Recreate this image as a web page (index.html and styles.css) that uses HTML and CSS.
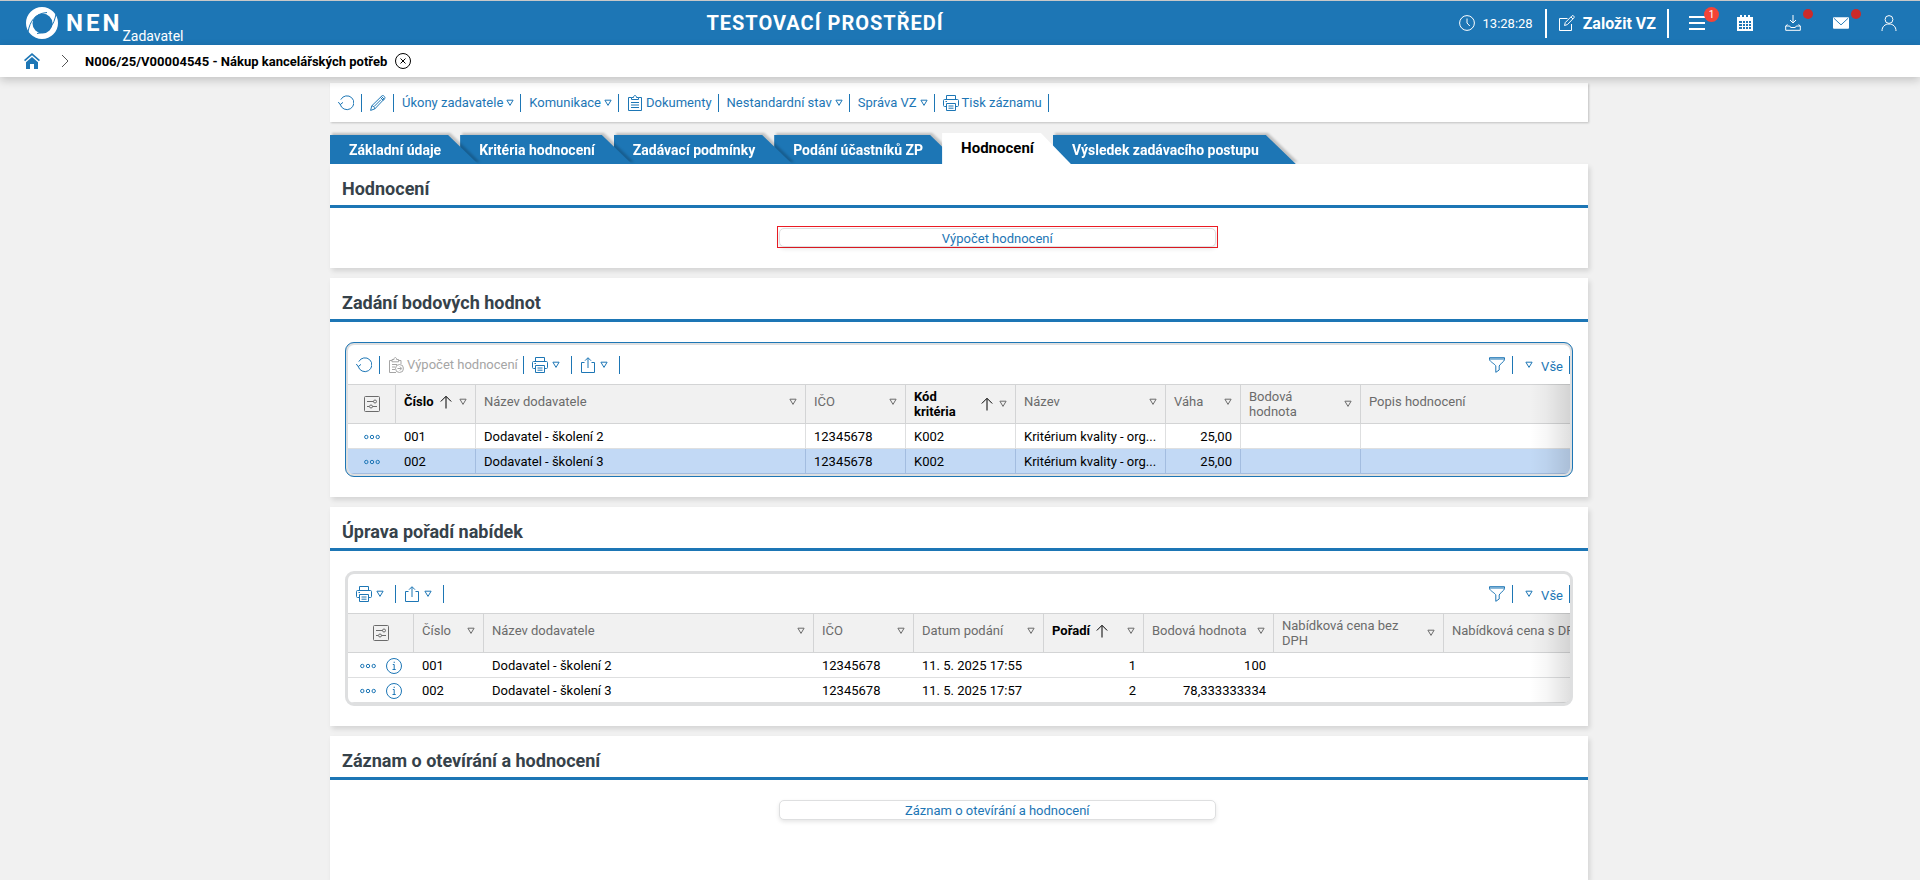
FILE: index.html
```html
<!DOCTYPE html>
<html lang="cs">
  <head>
    <meta charset="UTF-8" />
    <meta name="viewport" content="width=device-width, initial-scale=1.0" />
    <title>NEN - Hodnocení</title>
    <link rel="stylesheet" href="styles.css">
  </head>
  <body>
    <!-- Icon sprite -->
    <svg class="sprite" aria-hidden="true">
      <symbol id="i-refresh" viewBox="0 0 16 16">
        <path d="M2.200 9.200A6.900 6.900 0 1 0 2.800 4.600M.3 7l1.900 2.600L5 7.400" />
      </symbol>
      <symbol id="i-pencil" viewBox="0 0 16 16">
        <path d="M.6 15.400l1.200-4.600L12 .8c.6-.5 1.400-.3 2.200.5s1 1.600.5 2.200L4.800 13.900zM1.800 10.800c1.500.1 2.800 1.300 3 3.100M10.400 2.400l3 3M11.400 1.400l3 3M4 11.600L11 4.600" />
      </symbol>
      <symbol id="i-tri" viewBox="0 0 8 8">
        <path d="M.9 1.200h6.200L4 6.400z" />
      </symbol>
      <symbol id="i-clip" viewBox="0 0 16 16">
        <path d="M4.500 2.500h-3v13h13v-13h-3M4.500 4.500v-2h2c0-1.200.6-2 1.500-2s1.500.8 1.500 2h2v2zM4 7.500h8M4 10h8M4 12.500h8" />
      </symbol>
      <symbol id="i-clip-calc" viewBox="0 0 16 16">
        <path d="M8 15.500H1.500v-12H4M10.500 3.500h2.500V7M4 4.800V2.500h2c0-1.200.5-2 1.300-2s1.300.8 1.300 2h2v2.300zM4 7.500h5M4 10h3M4 12.500h3M9.500 11.500h4M11.800 9.500l2 2-2 2" />
        <circle cx="11.500" cy="11.500" r="4" />
      </symbol>
      <symbol id="i-print" viewBox="0 0 16 16">
        <path d="M3.500 4.500v-4h9v4M3.500 11.500h-2c-.6 0-1-.4-1-1v-5c0-.6.4-1 1-1h13c.6 0 1 .4 1 1v5c0 .6-.4 1-1 1h-2M3.500 8.500h9v7h-9zM5.500 11h5M5.500 13.200h5M2.500 6.500h1.500" />
      </symbol>
      <symbol id="i-share" viewBox="0 0 16 16">
        <path d="M4.500 5.500h-3v10h13v-10h-3M8 11V1M5 3.700L8 .7l3 3" />
      </symbol>
      <symbol id="i-filter" viewBox="0 0 16 16">
        <path d="M.5.700h15v2c0 1.600-5.300 5-5.300 6.300v4l-3.400 2.300V9C6.800 7.700.5 4.300.5 2.700zM.5 2h15" />
      </symbol>
      <symbol id="i-settings" viewBox="0 0 16 16">
        <rect x=".5" y=".5" width="15" height="15" rx="1" />
        <path d="M3 5.500h6.500M3 10.500h2M8.500 10.500H13" />
        <circle cx="11" cy="5.500" r="1.500" />
        <circle cx="7" cy="10.500" r="1.500" />
      </symbol>
      <symbol id="i-dots" viewBox="0 0 16 16">
        <circle cx="2.300" cy="8" r="1.700" />
        <circle cx="8" cy="8" r="1.700" />
        <circle cx="13.700" cy="8" r="1.700" />
      </symbol>
      <symbol id="i-info" viewBox="0 0 16 16">
        <circle cx="8" cy="8" r="7.500" />
        <path d="M6.800 6.500h1.400v5M6.500 11.500h3.200M8.200 3.700v1.300" />
      </symbol>
      <symbol id="i-up" viewBox="0 0 12 14">
        <path d="M6 13.500V1.500M.8 6.500L6 1.300l5.200 5.200" />
      </symbol>
      <symbol id="i-clock" viewBox="0 0 16 16">
        <circle cx="8" cy="8" r="7.400" />
        <path d="M8 3.500V8l2.800 3" />
      </symbol>
      <symbol id="i-edit" viewBox="0 0 16 16">
        <path d="M8.500 3.500h-8v12h12V9M5.500 10.500l.8-3L13 .8c.5-.4 1.200-.3 1.700.2s.7 1.300.2 1.800L8.400 9.600zM12 2l2 2" />
      </symbol>
      <symbol id="i-menu" viewBox="0 0 16 16">
        <path class="thick" d="M0 2h16M0 8h16M0 14h16" />
      </symbol>
      <symbol id="i-calendar" viewBox="0 0 16 16">
        <path class="solid" d="M0 2h3V0h2v2h2V0h2v2h2V0h2v2h3v14H0z" />
        <path class="blue" d="M2 6h12v8H2z" />
        <path d="M2 8.500h12M2 11.500h12M5.500 6v8M8.500 6v8M11.500 6v8" />
      </symbol>
      <symbol id="i-download" viewBox="0 0 16 16">
        <path d="M8 0v8M5 5l3 3 3-3M2.500 9.500L.7 11v4.300h14.600V11l-1.800-1.500M.7 11h4l1 1.500h4.600l1-1.500h4" />
      </symbol>
      <symbol id="i-mail" viewBox="0 0 17 16">
        <rect class="solid" x="0" y="2" width="17" height="12" rx="1" />
        <path class="blue-line" d="M1 3l7.500 7L16 3" />
      </symbol>
      <symbol id="i-user" viewBox="0 0 16 16">
        <circle cx="8" cy="4.500" r="3.900" />
        <path d="M1 16c0-4.500 3-7 7-7s7 2.500 7 7" />
      </symbol>
      <symbol id="i-home" viewBox="0 0 16 16">
        <path class="solid" d="M8 0l8 7-1.100 1.200L8 2.200 1.100 8.200 0 7z" />
        <path class="solid" d="M8 4l6 5.200V16h-4v-5H6v5H2V9.200z" />
      </symbol>
      <symbol id="i-close" viewBox="0 0 16 16">
        <circle cx="8" cy="8" r="7.500" />
        <path d="M5.500 5.500l5 5M10.500 5.500l-5 5" />
      </symbol>
    </svg>

    <header class="topbar">
      <a class="logo" href="#">
        <svg class="logo-mark" viewBox="0 0 32 32" aria-hidden="true">
          <path fill-rule="evenodd" d="M16 0a16 16 0 1 1 0 32a16 16 0 1 1 0-32zM16.500 6.500a10 10 0 1 0 0 20a10 10 0 1 0 0-20z" />
          <path class="logo-cut" d="M2 25C4 14 9 6.500 21 5.500M30 7C28 18 23 25.500 11 26.500" />
        </svg>
        <span class="logo-name">NEN</span>
        <span class="logo-role">Zadavatel</span>
      </a>
      <div class="env">TESTOVACÍ PROSTŘEDÍ</div>
      <div class="topbar-right">
        <span class="clock"><svg class="icon"><use href="#i-clock" /></svg>13:28:28</span>
        <button class="create"><svg class="icon"><use href="#i-edit" /></svg>Založit VZ</button>
        <nav class="top-icons">
          <button aria-label="Menu"><svg class="icon"><use href="#i-menu" /></svg><span class="badge">1</span></button>
          <button aria-label="Kalendář"><svg class="icon"><use href="#i-calendar" /></svg></button>
          <button aria-label="Stažení"><svg class="icon"><use href="#i-download" /></svg><span class="dot"></span></button>
          <button aria-label="Zprávy"><svg class="icon"><use href="#i-mail" /></svg><span class="dot"></span></button>
          <button aria-label="Uživatel"><svg class="icon"><use href="#i-user" /></svg></button>
        </nav>
      </div>
    </header>

    <nav class="breadcrumb">
      <a class="home" href="#" aria-label="Domů"><svg class="icon"><use href="#i-home" /></svg></a>
      <svg class="chevron" viewBox="0 0 8 14"><path d="M1 1l6 6-6 6" /></svg>
      <a class="crumb" href="#">N006/25/V00004545 - Nákup kancelářských potřeb</a>
      <button class="close" aria-label="Zavřít"><svg class="icon"><use href="#i-close" /></svg></button>
    </nav>

    <main class="content">
      <div class="toolbar main-toolbar">
        <button class="tool" aria-label="Obnovit"><svg class="icon"><use href="#i-refresh" /></svg></button>
        <button class="tool" aria-label="Upravit"><svg class="icon"><use href="#i-pencil" /></svg></button>
        <button class="tool">Úkony zadavatele<svg class="tri"><use href="#i-tri" /></svg></button>
        <button class="tool">Komunikace<svg class="tri"><use href="#i-tri" /></svg></button>
        <button class="tool"><svg class="icon"><use href="#i-clip" /></svg>Dokumenty</button>
        <button class="tool">Nestandardní stav<svg class="tri"><use href="#i-tri" /></svg></button>
        <button class="tool">Správa VZ<svg class="tri"><use href="#i-tri" /></svg></button>
        <button class="tool"><svg class="icon"><use href="#i-print" /></svg>Tisk záznamu</button>
      </div>

      <nav class="tabs">
        <a class="tab" href="#">Základní údaje</a>
        <a class="tab" href="#">Kritéria hodnocení</a>
        <a class="tab" href="#">Zadávací podmínky</a>
        <a class="tab" href="#">Podání účastníků ZP</a>
        <a class="tab active" href="#">Hodnocení</a>
        <a class="tab" href="#">Výsledek zadávacího postupu</a>
      </nav>

      <section class="panel">
        <h2>Hodnocení</h2>
        <div class="panel-body action-row">
          <div class="highlight"><button class="action">Výpočet hodnocení</button></div>
        </div>
      </section>

      <section class="panel">
        <h2>Zadání bodových hodnot</h2>
        <div class="panel-body">
          <div class="grid-box focused">
            <div class="toolbar">
              <button class="tool" aria-label="Obnovit"><svg class="icon"><use href="#i-refresh" /></svg></button>
              <button class="tool" disabled><svg class="icon"><use href="#i-clip-calc" /></svg>Výpočet hodnocení</button>
              <button class="tool menu" aria-label="Tisk"><svg class="icon"><use href="#i-print" /></svg><svg class="tri"><use href="#i-tri" /></svg></button>
              <button class="tool menu" aria-label="Export"><svg class="icon"><use href="#i-share" /></svg><svg class="tri"><use href="#i-tri" /></svg></button>
              <button class="tool push" aria-label="Filtr"><svg class="icon"><use href="#i-filter" /></svg></button>
              <button class="tool view"><svg class="tri"><use href="#i-tri" /></svg><span>Vše</span></button>
            </div>
            <div class="grid-scroll">
              <table class="lined">
                <colgroup>
                  <col class="w48"><col class="w80"><col class="w330"><col class="w100"><col class="w110"><col class="w150"><col class="w75"><col class="w120"><col>
                </colgroup>
                <thead>
                  <tr>
                    <th class="center"><svg class="icon"><use href="#i-settings" /></svg></th>
                    <th class="sorted"><div class="th"><span>Číslo</span><svg class="up"><use href="#i-up" /></svg><svg class="tri"><use href="#i-tri" /></svg></div></th>
                    <th><div class="th"><span>Název dodavatele</span><svg class="tri"><use href="#i-tri" /></svg></div></th>
                    <th><div class="th"><span>IČO</span><svg class="tri"><use href="#i-tri" /></svg></div></th>
                    <th class="sorted"><div class="th"><span>Kód kritéria</span><svg class="up"><use href="#i-up" /></svg><svg class="tri"><use href="#i-tri" /></svg></div></th>
                    <th><div class="th"><span>Název</span><svg class="tri"><use href="#i-tri" /></svg></div></th>
                    <th><div class="th"><span>Váha</span><svg class="tri"><use href="#i-tri" /></svg></div></th>
                    <th><div class="th"><span>Bodová hodnota</span><svg class="tri"><use href="#i-tri" /></svg></div></th>
                    <th><div class="th"><span>Popis hodnocení</span></div></th>
                  </tr>
                </thead>
                <tbody>
                  <tr>
                    <td class="center"><svg class="icon"><use href="#i-dots" /></svg></td>
                    <td>001</td>
                    <td>Dodavatel - školení 2</td>
                    <td>12345678</td>
                    <td>K002</td>
                    <td>Kritérium kvality - org...</td>
                    <td class="num">25,00</td>
                    <td></td>
                    <td></td>
                  </tr>
                  <tr class="selected">
                    <td class="center"><svg class="icon"><use href="#i-dots" /></svg></td>
                    <td>002</td>
                    <td>Dodavatel - školení 3</td>
                    <td>12345678</td>
                    <td>K002</td>
                    <td>Kritérium kvality - org...</td>
                    <td class="num">25,00</td>
                    <td></td>
                    <td></td>
                  </tr>
                </tbody>
              </table>
            </div>
          </div>
        </div>
      </section>

      <section class="panel">
        <h2>Úprava pořadí nabídek</h2>
        <div class="panel-body">
          <div class="grid-box">
            <div class="toolbar">
              <button class="tool menu" aria-label="Tisk"><svg class="icon"><use href="#i-print" /></svg><svg class="tri"><use href="#i-tri" /></svg></button>
              <button class="tool menu" aria-label="Export"><svg class="icon"><use href="#i-share" /></svg><svg class="tri"><use href="#i-tri" /></svg></button>
              <button class="tool push" aria-label="Filtr"><svg class="icon"><use href="#i-filter" /></svg></button>
              <button class="tool view"><svg class="tri"><use href="#i-tri" /></svg><span>Vše</span></button>
            </div>
            <div class="grid-scroll">
              <table class="wide">
                <colgroup>
                  <col class="w66"><col class="w70"><col class="w330"><col class="w100"><col class="w130"><col class="w100"><col class="w130"><col class="w170"><col class="w170">
                </colgroup>
                <thead>
                  <tr>
                    <th class="center"><svg class="icon"><use href="#i-settings" /></svg></th>
                    <th><div class="th"><span>Číslo</span><svg class="tri"><use href="#i-tri" /></svg></div></th>
                    <th><div class="th"><span>Název dodavatele</span><svg class="tri"><use href="#i-tri" /></svg></div></th>
                    <th><div class="th"><span>IČO</span><svg class="tri"><use href="#i-tri" /></svg></div></th>
                    <th><div class="th"><span>Datum podání</span><svg class="tri"><use href="#i-tri" /></svg></div></th>
                    <th class="sorted"><div class="th"><span>Pořadí</span><svg class="up"><use href="#i-up" /></svg><svg class="tri"><use href="#i-tri" /></svg></div></th>
                    <th><div class="th"><span>Bodová hodnota</span><svg class="tri"><use href="#i-tri" /></svg></div></th>
                    <th><div class="th"><span>Nabídková cena bez DPH</span><svg class="tri"><use href="#i-tri" /></svg></div></th>
                    <th><div class="th"><span>Nabídková cena s DPH</span></div></th>
                  </tr>
                </thead>
                <tbody>
                  <tr>
                    <td class="center"><svg class="icon"><use href="#i-dots" /></svg><svg class="icon"><use href="#i-info" /></svg></td>
                    <td>001</td>
                    <td>Dodavatel - školení 2</td>
                    <td>12345678</td>
                    <td>11. 5. 2025 17:55</td>
                    <td class="num">1</td>
                    <td class="num">100</td>
                    <td></td>
                    <td></td>
                  </tr>
                  <tr>
                    <td class="center"><svg class="icon"><use href="#i-dots" /></svg><svg class="icon"><use href="#i-info" /></svg></td>
                    <td>002</td>
                    <td>Dodavatel - školení 3</td>
                    <td>12345678</td>
                    <td>11. 5. 2025 17:57</td>
                    <td class="num">2</td>
                    <td class="num">78,333333334</td>
                    <td></td>
                    <td></td>
                  </tr>
                </tbody>
              </table>
            </div>
          </div>
        </div>
      </section>

      <section class="panel last">
        <h2>Záznam o otevírání a hodnocení</h2>
        <div class="panel-body action-row">
          <button class="action">Záznam o otevírání a hodnocení</button>
        </div>
      </section>
    </main>
  </body>
</html>
```
FILE: styles.css
```css
* {
  margin: 0;
  padding: 0;
  box-sizing: border-box;
}

body {
  font-family: Roboto, "Liberation Sans", sans-serif;
  font-size: 13px;
  height: 100vh;
  display: flex;
  flex-direction: column;
  overflow: hidden;
  background: #f1f1f1;
  color: #000;
}

button {
  font: inherit;
  color: inherit;
  background: none;
  border: none;
  cursor: pointer;
}

a {
  color: inherit;
  text-decoration: none;
}

svg {
  fill: none;
  stroke: currentColor;
  stroke-width: 1;
  flex: none;
  display: block;
}

.sprite {
  display: none;
}

.icon {
  width: 16px;
  height: 16px;
}

.tri {
  width: 8px;
  height: 8px;
}

.up {
  width: 12px;
  height: 14px;
}

.solid {
  fill: currentColor;
  stroke: none;
}

.thick {
  stroke-width: 2;
}

.blue {
  fill: #1d76b5;
  stroke: none;
}

.blue-line {
  stroke: #1d76b5;
}

/* Top bar */
.topbar {
  display: flex;
  align-items: center;
  justify-content: space-between;
  height: 45px;
  flex: none;
  padding: 0 7px 0 26px;
  border-top: 1px solid #c8c8c8;
  background: #1d76b5;
  color: #fff;
}

.logo {
  display: flex;
  align-items: center;
  padding-right: 8px;
}

.logo-mark {
  width: 32px;
  height: 32px;
  fill: #fff;
  stroke: none;
}

.logo-cut {
  fill: none;
  stroke: #1d76b5;
  stroke-width: 1;
}

.logo-name {
  margin-left: 8px;
  font-size: 24px;
  font-weight: 700;
  letter-spacing: 3px;
}

.logo-role {
  align-self: flex-end;
  font-size: 14px;
  line-height: 6px;
}

.env {
  font-size: 20px;
  font-weight: 700;
  letter-spacing: 1px;
}

.topbar-right {
  display: flex;
  align-items: center;
}

.clock {
  display: flex;
  align-items: center;
  gap: 8px;
  margin-right: 12px;
}

.create {
  display: flex;
  align-items: center;
  gap: 8px;
  height: 29px;
  padding: 0 11px 0 12px;
  border: solid #fff;
  border-width: 0 2px;
  font-size: 16px;
  font-weight: 700;
}

.top-icons {
  display: flex;
  margin-left: 4px;
}

.top-icons button {
  position: relative;
  width: 48px;
  height: 44px;
  display: flex;
  align-items: center;
  justify-content: center;
}

.badge {
  position: absolute;
  top: 6px;
  left: 31px;
  width: 15px;
  height: 15px;
  border-radius: 50%;
  background: #f44336;
  font-size: 10px;
  line-height: 15px;
  text-align: center;
}

.dot {
  position: absolute;
  top: 8px;
  left: 34px;
  width: 10px;
  height: 10px;
  border-radius: 50%;
  background: #cb2a2a;
}

/* Breadcrumb */
.breadcrumb {
  position: relative;
  display: flex;
  align-items: center;
  height: 32px;
  flex: none;
  padding: 0 24px;
  background: #fff;
  box-shadow: 0 3px 9px rgba(0, 0, 0, 0.2);
}

.home {
  color: #1d76b5;
}

.chevron {
  width: 8px;
  height: 14px;
  margin: 0 16px 0 21px;
  stroke: #555;
}

.crumb {
  font-weight: 700;
  margin-right: 8px;
}

/* Content */
.content {
  flex: 1;
  display: flex;
  flex-direction: column;
  width: 100%;
  max-width: 1260px;
  margin: 0 auto;
  padding: 6px 2px 0 0;
}

.toolbar {
  display: flex;
  align-items: center;
  height: 39px;
  color: #1d76b5;
}

.tool {
  display: flex;
  align-items: center;
  gap: 4px;
  height: 18px;
  padding: 0 7px 0 8px;
  border-right: 1px solid #1d76b5;
}

.tool:disabled {
  gap: 3px;
  padding-right: 5px;
  color: #a5a5a5;
}

.tool.menu {
  padding-right: 11px;
}

.main-toolbar {
  flex: none;
  background: #fff;
  box-shadow: 1px 1px 2px rgba(0, 0, 0, 0.2);
}

.main-toolbar .tool {
  gap: 3px;
  padding: 0 6px 0 8px;
}

.main-toolbar .tool[aria-label] {
  padding-right: 7px;
}

.push {
  margin-left: auto;
}

.tool.view {
  gap: 8px;
  padding: 0 6px 0 12px;
}

.view span {
  padding-top: 4px;
}

/* Tabs */
.tabs {
  display: flex;
  align-items: flex-end;
  margin-top: 11px;
  flex: none;
}

.tab {
  position: relative;
  z-index: 1;
  height: 29px;
  padding: 0 19px;
  font-size: 14px;
  line-height: 31px;
  font-weight: 700;
  color: #fff;
  filter: drop-shadow(2px -2px 1px rgba(0, 0, 0, 0.2));
}

.tab:nth-child(1) {
  z-index: 4;
}

.tab:nth-child(2) {
  z-index: 3;
}

.tab:nth-child(3) {
  z-index: 2;
}

.tab::before {
  content: "";
  position: absolute;
  z-index: -1;
  top: 0;
  bottom: 0;
  left: 0;
  right: -18px;
  background: #1d76b5;
  clip-path: polygon(0 0, calc(100% - 30px) 0, 100% 100%, 0 100%);
}

.tab.active {
  z-index: 5;
  height: 31px;
  font-size: 15px;
  color: #000;
  filter: none;
}

.tab.active::before {
  background: #fff;
}

/* Panels */
.panel {
  margin-bottom: 10px;
  flex: none;
  background: #fff;
  box-shadow: 2px 3px 5px rgba(0, 0, 0, 0.12);
}

.panel.last {
  flex: 1;
  margin-bottom: 0;
}

.panel h2 {
  height: 44px;
  padding: 5px 12px 0;
  border-bottom: 3px solid #1d76b5;
  font-size: 18px;
  font-weight: 700;
  line-height: 40px;
  color: #36424a;
}

.panel-body {
  padding: 20px 15px;
}

.action-row {
  display: grid;
  grid-template-columns: 41fr 40fr 34fr;
  padding: 20px 0;
}

.action-row > * {
  grid-column: 2;
}

.action {
  width: 100%;
  height: 20px;
  padding-top: 1px;
  border: 1px solid #dedfe0;
  border-radius: 5px;
  box-shadow: 0 2px 4px rgba(0, 0, 0, 0.1);
  background: #fff;
  color: #1d76b5;
  line-height: 18px;
}

.highlight {
  margin: -2px -2px 0;
  padding: 1px 1px 0;
  height: 22px;
  border: 1px solid #ec1c24;
}

.highlight .action {
  display: block;
  height: 19px;
}

/* Grids */
.grid-box {
  border: 3px solid #dedfe0;
  border-radius: 9px;
  overflow: hidden;
}

.grid-box.focused {
  outline: 1px solid #1d76b5;
  outline-offset: -1px;
}

.grid-scroll {
  position: relative;
  overflow: hidden;
}

.grid-scroll::after {
  content: "";
  position: absolute;
  top: 0;
  right: 0;
  bottom: 0;
  width: 40px;
  background: linear-gradient(to right, rgba(0, 0, 0, 0), rgba(0, 0, 0, 0.03) 40%, rgba(0, 0, 0, 0.12));
}

table {
  width: 100%;
  table-layout: fixed;
  border-collapse: separate;
  border-spacing: 0;
}

table.wide {
  width: 1266px;
}

.w48 { width: 48px; }
.w66 { width: 66px; }
.w70 { width: 70px; }
.w75 { width: 75px; }
.w80 { width: 80px; }
.w100 { width: 100px; }
.w110 { width: 110px; }
.w120 { width: 120px; }
.w130 { width: 130px; }
.w150 { width: 150px; }
.w170 { width: 170px; }
.w330 { width: 330px; }

th {
  height: 40px;
  padding: 4px 8px;
  border: solid #d3d4d5;
  border-width: 1px 1px 1px 0;
  background: #f1f1f1;
  color: #6b6b6b;
  font-weight: 400;
  text-align: left;
  vertical-align: top;
}

th.center {
  vertical-align: middle;
}

th:last-child {
  border-right: none;
  white-space: nowrap;
}

th.sorted {
  color: #000;
  font-weight: 700;
}

th.sorted .tri {
  color: #6b6b6b;
}

.th {
  display: flex;
  align-items: center;
  gap: 6px;
  min-height: 25px;
  line-height: 15px;
}

.th .tri {
  margin-left: auto;
}

td {
  height: 25px;
  padding: 1px 8px 0;
  border-bottom: 1px solid #dedfe0;
  line-height: 23px;
  white-space: nowrap;
}

.lined td + td {
  border-right: 1px solid #dedfe0;
}

.lined td:last-child {
  border-right: none;
}

.selected td {
  background: #c2d9f5;
  border-color: #a3bde0 !important;
}

.center {
  text-align: center;
  padding: 0;
}

.center .icon {
  display: inline-block;
  vertical-align: middle;
}

.center .icon + .icon {
  margin-left: 10px;
}

td .icon {
  color: #1d76b5;
}

.num {
  text-align: right;
}
```
